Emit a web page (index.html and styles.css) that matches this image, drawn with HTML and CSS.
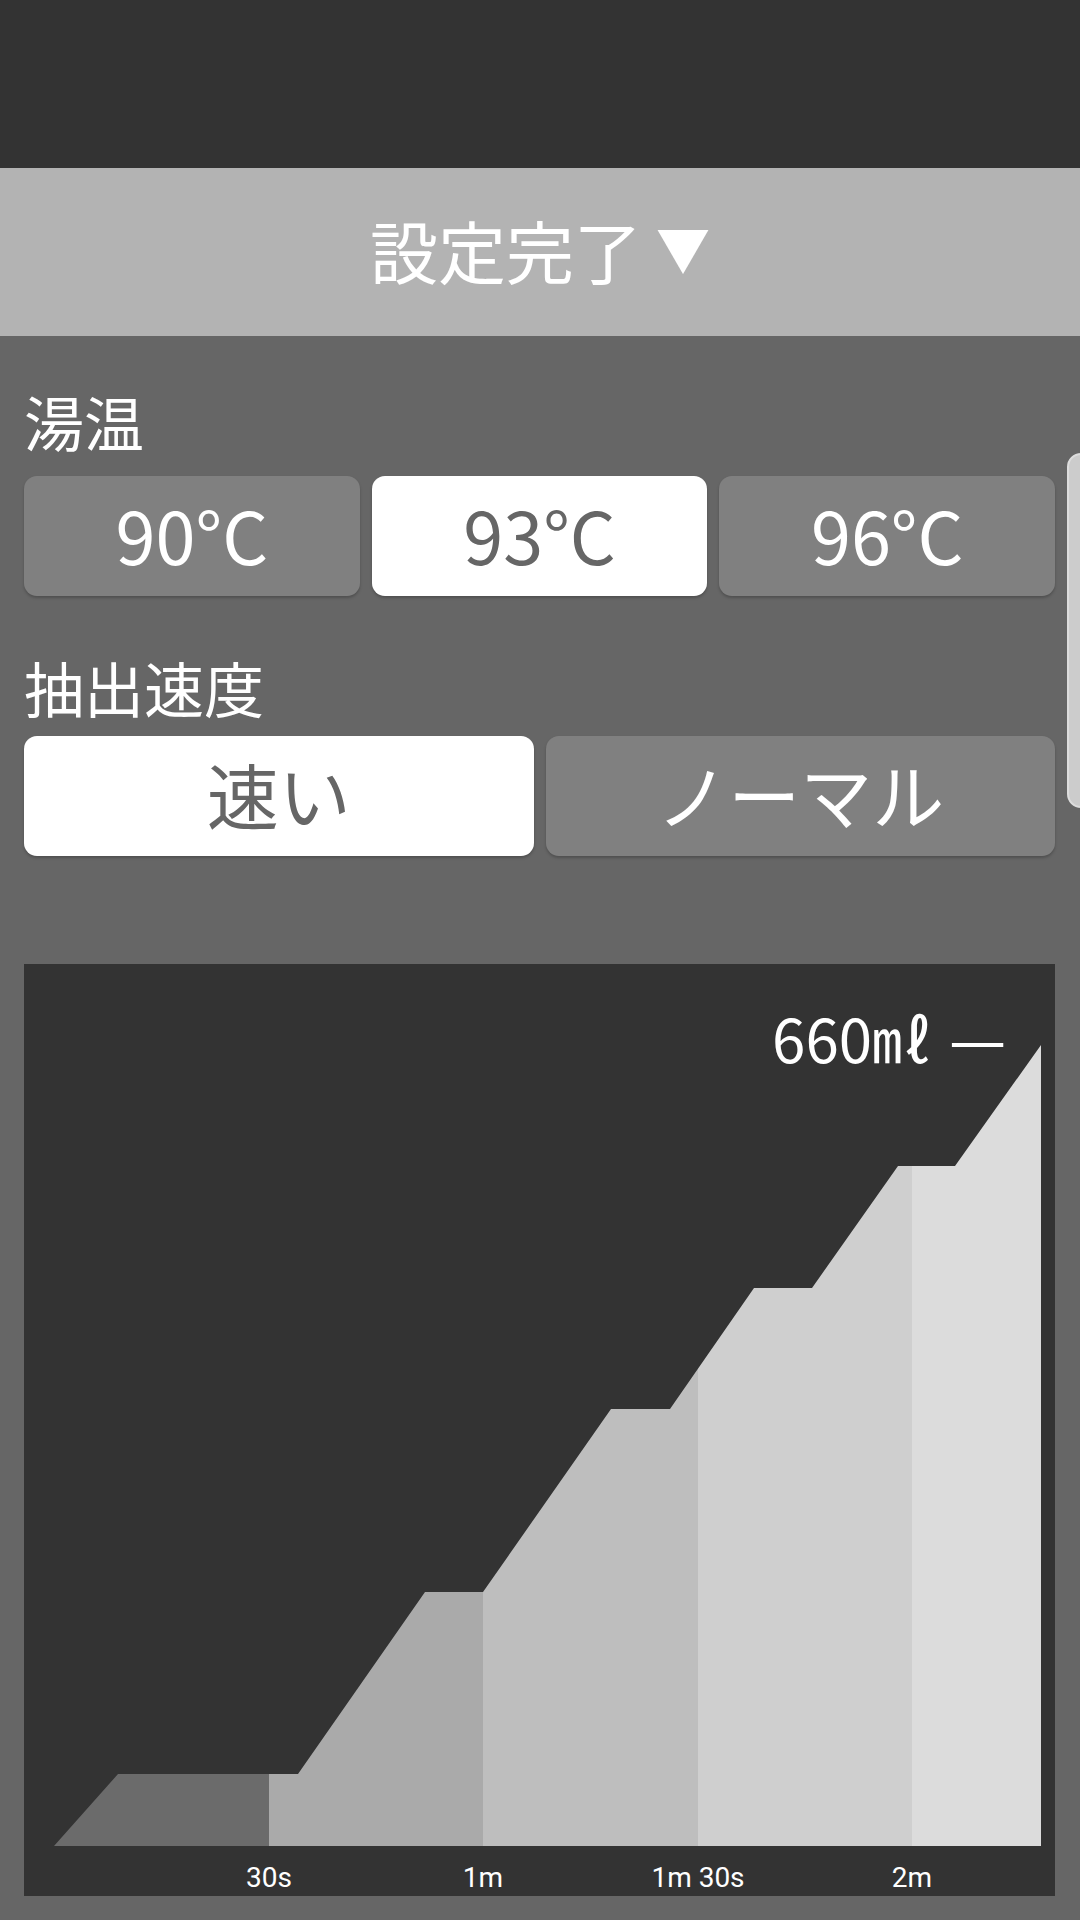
FILE: index.html
```html
<!DOCTYPE html>
<html lang="ja">
<head>
  <meta charset="UTF-8" />
  <meta name="viewport" content="width=device-width, initial-scale=1" />
  <title>抽出設定</title>
  <link rel="stylesheet" href="styles.css">
</head>
<body>
  <div class="status-bar"></div>

  <header class="done-bar">設定完了<span class="arrow">▼</span></header>

  <main class="settings">
    <section class="group">
      <h2 class="label">湯温</h2>
      <div class="choices">
        <button class="choice">90°C</button>
        <button class="choice selected">93°C</button>
        <button class="choice">96°C</button>
      </div>
    </section>

    <section class="group speed">
      <h2 class="label">抽出速度</h2>
      <div class="choices">
        <button class="choice selected">速い</button>
        <button class="choice">ノーマル</button>
      </div>
    </section>

    <!-- 注湯グラフ -->
    <div class="chart">
      <svg width="1031" height="932" viewBox="0 0 1031 932">
        <defs>
          <clipPath id="pour">
            <polygon points="30,882 94,810 274,810 401,628 459,628 587,445 646,445 730,324 788,324 874,202 931,202 1017,81 1017,882" />
          </clipPath>
        </defs>
        <g clip-path="url(#pour)">
          <rect x="30" y="0" width="215" height="882" fill="#6b6b6b" />
          <rect x="245" y="0" width="214" height="882" fill="#aaaaaa" />
          <rect x="459" y="0" width="215" height="882" fill="#bebebe" />
          <rect x="674" y="0" width="214" height="882" fill="#cfcfcf" />
          <rect x="888" y="0" width="130" height="882" fill="#dcdcdc" />
        </g>
        <text class="volume" x="908" y="99" text-anchor="end">660㎖</text>
        <text class="volume dash" x="925" y="99">—</text>
        <g class="axis">
          <text x="245" y="923" text-anchor="middle">30s</text>
          <text x="459" y="923" text-anchor="middle">1m</text>
          <text x="674" y="923" text-anchor="middle">1m 30s</text>
          <text x="888" y="923" text-anchor="middle">2m</text>
        </g>
      </svg>
    </div>
  </main>

  <div class="scroll-tab"></div>
</body>
</html>
```

FILE: styles.css
```css
*, *::before, *::after { box-sizing: border-box; }
body {
  margin: 0;
  font-family: "Noto Sans CJK JP", "Noto Sans", sans-serif;
  background: #666666;
  color: #ffffff;
  min-height: 100vh;
  overflow: hidden;
}
.status-bar {
  height: 168px;
  background-color: #333333;
}
.done-bar {
  height: 168px;
  background-color: #b3b3b3;
  display: flex;
  align-items: center;
  justify-content: center;
  font-size: 68px;
  line-height: 1;
  color: #ffffff;
  padding-bottom: 4px;
}
.done-bar .arrow {
  font-size: 54px;
  margin-left: 14px;
  padding-bottom: 4px;
}
.settings {
  padding: 55px 25px 0 24px;
}
.label {
  margin: 0 0 25px;
  height: 60px;
  font-size: 60px;
  line-height: 60px;
  font-weight: normal;
  color: #ffffff;
}
.group.speed {
  margin-top: 61px;
}
.group.speed .label {
  margin-bottom: 19px;
}
.choices {
  display: flex;
  gap: 12px;
}
.choice {
  flex: 1;
  height: 120px;
  border: none;
  border-radius: 13px;
  background-color: #808080;
  color: #ffffff;
  font-family: "Noto Sans CJK JP", sans-serif;
  font-size: 72px;
  line-height: 1;
  padding: 0 0 4px;
  box-shadow: 0 2px 3px rgba(0,0,0,0.22);
}
.speed .choice {
  padding-bottom: 6px;
}
.choice.selected {
  background-color: #ffffff;
  color: #666666;
}

/* グラフ */
.chart {
  margin-top: 108px;
  height: 932px;
  background-color: #333333;
}
.chart svg {
  display: block;
}
.volume {
  font-family: "Noto Sans CJK JP", sans-serif;
  font-size: 60px;
  fill: #ffffff;
}
.volume.dash {
  font-size: 64px;
}
.axis text {
  font-family: Roboto, "Liberation Sans", sans-serif;
  font-size: 28px;
  fill: #ffffff;
}

.scroll-tab {
  position: absolute;
  top: 453px;
  left: 1067px;
  width: 40px;
  height: 355px;
  border-radius: 14px;
  background-color: #cccccc;
  border: 2px solid #dddddd;
}
```
